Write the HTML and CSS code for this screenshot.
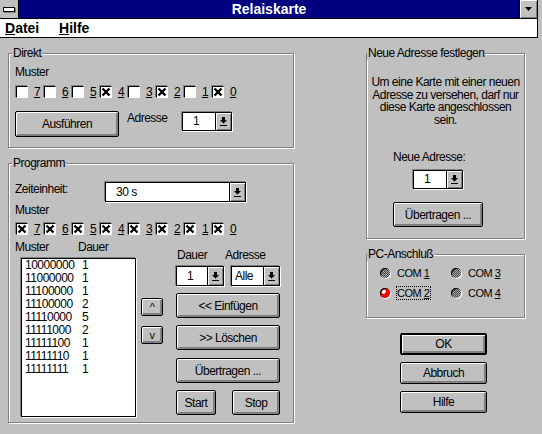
FILE: index.html
```html
<!DOCTYPE html>
<html lang="de">
<head>
<meta charset="utf-8">
<title>Relaiskarte</title>
<link rel="stylesheet" href="styles.css">
</head>
<body>
<div class="titlebar">
  <div class="sysmenu"><span class="sysbar"></span></div>
  <div class="title">Relaiskarte</div>
  <div class="tbtn"><svg width="7" height="4" viewBox="0 0 7 4"><path d="M0 0h7L3.5 4z"/></svg></div>
</div>
<div class="menubar">
  <span class="menu m1"><u>D</u>atei</span>
  <span class="menu"><u>H</u>ilfe</span>
</div>
<div class="client">
  <div class="left">
    <fieldset class="group direkt">
      <legend>Direkt</legend>
      <div class="label">Muster</div>
      <div class="bits">
        <span class="bit"><span class="cb"></span><u>7</u></span>
        <span class="bit"><span class="cb"></span><u>6</u></span>
        <span class="bit"><span class="cb"></span><u>5</u></span>
        <span class="bit"><span class="cb"><svg viewBox="0 0 10 10"><path d="M1.5 1.5L8.5 8.5M8.5 1.5L1.5 8.5"/></svg></span><u>4</u></span>
        <span class="bit"><span class="cb"></span><u>3</u></span>
        <span class="bit"><span class="cb"><svg viewBox="0 0 10 10"><path d="M1.5 1.5L8.5 8.5M8.5 1.5L1.5 8.5"/></svg></span><u>2</u></span>
        <span class="bit"><span class="cb"></span><u>1</u></span>
        <span class="bit"><span class="cb"><svg viewBox="0 0 10 10"><path d="M1.5 1.5L8.5 8.5M8.5 1.5L1.5 8.5"/></svg></span><u>0</u></span>
      </div>
      <div class="exec">
        <button class="btn b-ausf">Ausführen</button>
        <span class="lbl-adr">Adresse</span>
        <div class="combo c-adr">
          <span class="val">1</span>
          <span class="arr"><svg width="7" height="9" viewBox="0 0 7 9"><path d="M2 0h3v3h2L3.5 6.5 0 3h2z"/><rect y="8" width="7" height="1"/></svg></span>
        </div>
      </div>
    </fieldset>

    <fieldset class="group programm">
      <legend>Programm</legend>
      <div class="zrow">
        <span class="zlabel">Zeiteinheit:</span>
        <div class="combo c-zeit">
          <span class="val">30 s</span>
          <span class="arr"><svg width="7" height="9" viewBox="0 0 7 9"><path d="M2 0h3v3h2L3.5 6.5 0 3h2z"/><rect y="8" width="7" height="1"/></svg></span>
        </div>
      </div>
      <div class="label p-muster">Muster</div>
      <div class="bits p-bits">
        <span class="bit"><span class="cb"><svg viewBox="0 0 10 10"><path d="M1.5 1.5L8.5 8.5M8.5 1.5L1.5 8.5"/></svg></span><u>7</u></span>
        <span class="bit"><span class="cb"><svg viewBox="0 0 10 10"><path d="M1.5 1.5L8.5 8.5M8.5 1.5L1.5 8.5"/></svg></span><u>6</u></span>
        <span class="bit"><span class="cb"><svg viewBox="0 0 10 10"><path d="M1.5 1.5L8.5 8.5M8.5 1.5L1.5 8.5"/></svg></span><u>5</u></span>
        <span class="bit"><span class="cb"><svg viewBox="0 0 10 10"><path d="M1.5 1.5L8.5 8.5M8.5 1.5L1.5 8.5"/></svg></span><u>4</u></span>
        <span class="bit"><span class="cb"><svg viewBox="0 0 10 10"><path d="M1.5 1.5L8.5 8.5M8.5 1.5L1.5 8.5"/></svg></span><u>3</u></span>
        <span class="bit"><span class="cb"><svg viewBox="0 0 10 10"><path d="M1.5 1.5L8.5 8.5M8.5 1.5L1.5 8.5"/></svg></span><u>2</u></span>
        <span class="bit"><span class="cb"><svg viewBox="0 0 10 10"><path d="M1.5 1.5L8.5 8.5M8.5 1.5L1.5 8.5"/></svg></span><u>1</u></span>
        <span class="bit"><span class="cb"><svg viewBox="0 0 10 10"><path d="M1.5 1.5L8.5 8.5M8.5 1.5L1.5 8.5"/></svg></span><u>0</u></span>
      </div>
      <div class="lower">
        <div class="listcol">
          <div class="lhdr"><span>Muster</span><span>Dauer</span></div>
          <div class="listbox">
            <div class="item"><span>10000000</span><span>1</span></div>
            <div class="item"><span>11000000</span><span>1</span></div>
            <div class="item"><span>11100000</span><span>1</span></div>
            <div class="item"><span>11100000</span><span>2</span></div>
            <div class="item"><span>11110000</span><span>5</span></div>
            <div class="item"><span>11111000</span><span>2</span></div>
            <div class="item"><span>11111100</span><span>1</span></div>
            <div class="item"><span>11111110</span><span>1</span></div>
            <div class="item"><span>11111111</span><span>1</span></div>
          </div>
        </div>
        <div class="arrows">
          <button class="btn sbtn">^</button>
          <button class="btn sbtn">v</button>
        </div>
        <div class="ctrlcol">
          <div class="chdr"><span>Dauer</span><span>Adresse</span></div>
          <div class="combos">
            <div class="combo c-dauer">
              <span class="val">1</span>
              <span class="arr"><svg width="7" height="9" viewBox="0 0 7 9"><path d="M2 0h3v3h2L3.5 6.5 0 3h2z"/><rect y="8" width="7" height="1"/></svg></span>
            </div>
            <div class="combo c-alle">
              <span class="val">Alle</span>
              <span class="arr"><svg width="7" height="9" viewBox="0 0 7 9"><path d="M2 0h3v3h2L3.5 6.5 0 3h2z"/><rect y="8" width="7" height="1"/></svg></span>
            </div>
          </div>
          <button class="btn cbtn">&lt;&lt; Einfügen</button>
          <button class="btn cbtn">&gt;&gt; Löschen</button>
          <button class="btn cbtn c-ueb">Übertragen ...</button>
          <div class="ss">
            <button class="btn b-start">Start</button>
            <button class="btn b-stop">Stop</button>
          </div>
        </div>
      </div>
    </fieldset>
  </div>

  <div class="right">
    <fieldset class="group neu">
      <legend>Neue Adresse festlegen</legend>
      <p class="desc">Um eine Karte mit einer neuen<br>Adresse zu versehen, darf nur<br>diese Karte angeschlossen<br>sein.</p>
      <div class="nlabel">Neue Adresse:</div>
      <div class="combo c-neu">
        <span class="val">1</span>
        <span class="arr"><svg width="7" height="9" viewBox="0 0 7 9"><path d="M2 0h3v3h2L3.5 6.5 0 3h2z"/><rect y="8" width="7" height="1"/></svg></span>
      </div>
      <button class="btn b-ueb">Übertragen ...</button>
    </fieldset>

    <fieldset class="group pc">
      <legend>PC-Anschluß</legend>
      <div class="comgrid">
        <span class="com"><span class="led"></span><span class="ctxt">COM <u>1</u></span></span>
        <span class="com"><span class="led"></span><span class="ctxt">COM <u>3</u></span></span>
        <span class="com"><span class="led red"></span><span class="ctxt focus">COM <u>2</u></span></span>
        <span class="com"><span class="led"></span><span class="ctxt">COM <u>4</u></span></span>
      </div>
    </fieldset>

    <button class="btn dbtn ok">OK</button>
    <button class="btn dbtn">Abbruch</button>
    <button class="btn dbtn">Hilfe</button>
  </div>
</div>
</body>
</html>
```

FILE: styles.css
```css
* { box-sizing: border-box; }
html, body { margin: 0; padding: 0; }
body {
  width: 542px;
  height: 434px;
  overflow: hidden;
  background: #c0c0c0;
  font-family: "Liberation Sans", Arial, sans-serif;
  font-size: 12px;
  letter-spacing: -0.5px;
  color: #000;
}
u { text-decoration: underline; text-underline-offset: 1px; }

/* title bar */
.titlebar {
  display: flex;
  width: 538px;
  height: 19px;
  background: #000080;
  border-bottom: 1px solid #000;
  border-right: 1px solid #000;
}
.sysmenu {
  width: 19px;
  background: #c0c0c0;
  border-right: 1px solid #000;
  padding: 7px 0 0 3px;
}
.sysbar {
  display: block;
  width: 12px;
  height: 5px;
  background: #fff;
  border: 1px solid #000;
  box-shadow: 1px 1px 0 #808080;
}
.title {
  flex: 1;
  color: #fff;
  font-weight: bold;
  font-size: 14px;
  letter-spacing: 0;
  line-height: 18px;
  text-align: center;
}
.tbtn {
  width: 18px;
  background: #c0c0c0;
  border-left: 1px solid #000;
  box-shadow: inset 1px 1px 0 #fff, inset -1px -1px 0 #808080;
  display: flex;
  align-items: center;
  justify-content: center;
}
.tbtn svg { display: block; }

/* menu */
.menubar {
  display: flex;
  width: 538px;
  height: 19px;
  background: #fff;
  border-bottom: 1px solid #000;
  border-right: 1px solid #000;
  font-weight: bold;
  font-size: 14px;
  letter-spacing: 0;
  line-height: 18px;
  padding-left: 5px;
}
.menu.m1 { width: 54px; }

/* client */
.client {
  display: flex;
  align-items: flex-start;
  padding: 9px 0 0 8px;
}
.left { width: 286px; }
.right { width: 159px; margin-left: 72px; }

.group {
  margin: 0;
  min-width: 0;
  border: 1px solid #808080;
  box-shadow: inset 1px 1px 0 #fff, 1px 1px 0 #fff;
}
.group legend {
  padding: 0 1px;
  line-height: 13px;
  background: #c0c0c0;
}
.direkt { padding: 5px 6px 10px 6px; }
.programm { margin-top: 9px; padding: 12px 6px 5px 6px; }
.direkt legend, .programm legend { margin-left: -3px; }

.label { line-height: 14px; }

/* checkboxes */
.bits {
  display: flex;
  align-items: center;
  height: 14px;
  margin-top: 6px;
  padding-left: 1px;
}
.bit {
  display: flex;
  align-items: center;
  width: 28px;
  line-height: 14px;
}
.cb {
  display: flex;
  width: 12px;
  height: 12px;
  margin-right: 6px;
  background: #fff;
  border: 1px solid;
  border-color: #000 #fff #fff #000;
  box-shadow: -1px -1px 0 #808080;
}
.cb svg {
  width: 10px;
  height: 10px;
  fill: none;
  stroke: #000;
  stroke-width: 2.3;
}

/* buttons */
.btn {
  display: block;
  padding: 0;
  margin: 0;
  font: inherit;
  letter-spacing: inherit;
  color: #000;
  background: #c0c0c0;
  border: 1px solid #000;
  border-radius: 2px;
  box-shadow: inset 1px 1px 0 #fff, inset -2px -2px 0 #808080;
  text-align: center;
}

.exec {
  display: flex;
  align-items: flex-start;
  margin-top: 12px;
}
.b-ausf { width: 104px; height: 26px; }
.lbl-adr { width: 55px; margin-left: 8px; line-height: 14px; }

/* combo boxes */
.combo {
  display: flex;
  height: 19px;
  background: #fff;
  border: 1px solid #000;
  box-shadow: -1px -1px 0 #808080, 1px 1px 0 #fff;
}
.combo .val {
  flex: 1;
  line-height: 17px;
  padding-left: 10px;
}
.combo .arr {
  width: 16px;
  display: flex;
  align-items: center;
  justify-content: center;
  background: #c0c0c0;
  border-left: 1px solid #000;
  box-shadow: inset 1px 1px 0 #fff, inset -1px -1px 0 #808080;
}
.combo .arr svg { display: block; }
.c-adr { width: 50px; margin-top: 1px; }

/* programm */
.zrow { display: flex; height: 20px; }
.zlabel { width: 90px; line-height: 14px; }
.c-zeit { width: 141px; height: 20px; }
.c-zeit .val { line-height: 18px; }
.p-muster { margin-top: 1px; }
.p-bits { margin-top: 5px; }

.lower { display: flex; align-items: flex-start; margin-top: 4px; }
.listcol { width: 121px; }
.lhdr { display: flex; line-height: 14px; }
.lhdr span:first-child { width: 63px; }
.listbox {
  width: 115px;
  height: 159px;
  margin: 4px 0 0 6px;
  padding-left: 3px;
  background: #fff;
  border: 1px solid #000;
  box-shadow: -1px -1px 0 #808080, 1px 1px 0 #fff;
}
.item { display: flex; line-height: 13px; }
.item span:first-child { width: 57px; }

.arrows {
  width: 22px;
  margin-left: 5px;
  padding-top: 58px;
}
.sbtn { width: 22px; height: 18px; line-height: 14px; font-size: 11px; }
.sbtn + .sbtn { margin-top: 10px; }

.ctrlcol {
  width: 104px;
  margin-left: 13px;
  padding-top: 8px;
}
.chdr { display: flex; line-height: 14px; padding-left: 1px; }
.chdr span:first-child { width: 48px; }
.combos { display: flex; margin-top: 4px; }
.c-dauer { width: 48px; height: 20px; }
.c-alle { width: 49px; height: 20px; margin-left: 7px; }
.c-dauer .val, .c-alle .val { line-height: 18px; }
.c-alle .val { padding-left: 3px; }
.cbtn { width: 104px; height: 25px; margin-top: 7px; }
.cbtn.c-ueb { margin-top: 8px; }
.ss { display: flex; justify-content: space-between; margin-top: 7px; }
.b-start { width: 40px; height: 25px; }
.b-stop { width: 48px; height: 25px; }

/* right column */
.neu { padding: 16px 0 11px 0; }
.neu legend, .pc legend { margin-left: 0; }
.desc {
  margin: 0;
  text-align: center;
  line-height: 12.5px;
  white-space: nowrap;
}
.nlabel { margin: 24px 0 0 26px; line-height: 14px; }
.c-neu { width: 50px; margin: 6px 0 0 46px; }
.b-ueb { width: 90px; height: 25px; margin: 13px 0 0 26px; }

.pc { margin-top: 9px; padding: 2px 0 14px 13px; }
.pc legend { margin-left: -13px; }
.comgrid {
  display: grid;
  grid-template-columns: 71px 71px;
  grid-auto-rows: 20px;
}
.com { display: flex; align-items: center; font-size: 11px; }
.led {
  width: 10px;
  height: 10px;
  border-radius: 50%;
  margin-right: 6px;
  background: repeating-conic-gradient(#404040 0% 25%, #b0b0b0 0% 50%) 0 0 / 2px 2px;
  box-shadow: inset 1px 1px 0 #000, 1px 1px 0 #fff;
}
.led.red {
  background: radial-gradient(circle at 35% 35%, #fff 0 18%, #ff0000 30%, #d00000 100%);
  box-shadow: inset 1px 1px 0 #000, 1px 1px 0 #fff;
}
.ctxt {
  line-height: 12px;
  border: 1px dotted transparent;
  padding-right: 1px;
}
.ctxt.focus { border-color: #000; }

.dbtn { width: 87px; height: 22px; margin: 7px 0 0 34px; }
.dbtn.ok { margin-top: 15px; border-width: 2px; box-shadow: inset 1px 1px 0 #fff, inset -2px -2px 0 #808080; }
```
